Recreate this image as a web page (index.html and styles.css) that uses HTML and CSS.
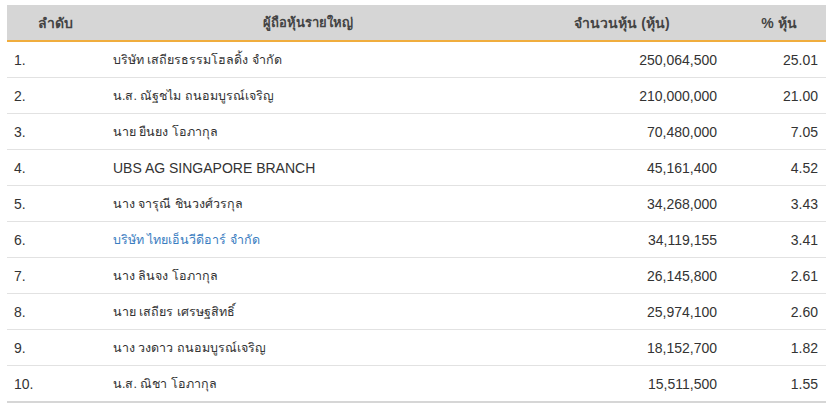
FILE: index.html
```html
<!DOCTYPE html>
<html lang="th">
<head>
<meta charset="utf-8">
<link rel="stylesheet" href="styles.css">
</head>
<body>
<div class="wrap">
<table class="holders">
<thead>
<tr>
<th class="c-no">ลำดับ</th>
<th class="c-name th">ผู้ถือหุ้นรายใหญ่</th>
<th class="c-shares">จำนวนหุ้น (หุ้น)</th>
<th class="c-pct">% หุ้น</th>
</tr>
</thead>
<tbody>
<tr><td class="c-no">1.</td><td class="c-name th">บริษัท เสถียรธรรมโฮลดิ้ง จำกัด</td><td class="c-shares">250,064,500</td><td class="c-pct">25.01</td></tr>
<tr><td class="c-no">2.</td><td class="c-name th">น.ส. ณัฐชไม ถนอมบูรณ์เจริญ</td><td class="c-shares">210,000,000</td><td class="c-pct">21.00</td></tr>
<tr><td class="c-no">3.</td><td class="c-name th">นาย ยืนยง โอภากุล</td><td class="c-shares">70,480,000</td><td class="c-pct">7.05</td></tr>
<tr><td class="c-no">4.</td><td class="c-name">UBS AG SINGAPORE BRANCH</td><td class="c-shares">45,161,400</td><td class="c-pct">4.52</td></tr>
<tr><td class="c-no">5.</td><td class="c-name th">นาง จารุณี ชินวงศ์วรกุล</td><td class="c-shares">34,268,000</td><td class="c-pct">3.43</td></tr>
<tr><td class="c-no">6.</td><td class="c-name th"><a class="link" href="#">บริษัท ไทยเอ็นวีดีอาร์ จำกัด</a></td><td class="c-shares">34,119,155</td><td class="c-pct">3.41</td></tr>
<tr><td class="c-no">7.</td><td class="c-name th">นาง ลินจง โอภากุล</td><td class="c-shares">26,145,800</td><td class="c-pct">2.61</td></tr>
<tr><td class="c-no">8.</td><td class="c-name th">นาย เสถียร เศรษฐสิทธิ์</td><td class="c-shares">25,974,100</td><td class="c-pct">2.60</td></tr>
<tr><td class="c-no">9.</td><td class="c-name th">นาง วงดาว ถนอมบูรณ์เจริญ</td><td class="c-shares">18,152,700</td><td class="c-pct">1.82</td></tr>
<tr><td class="c-no">10.</td><td class="c-name th">น.ส. ณิชา โอภากุล</td><td class="c-shares">15,511,500</td><td class="c-pct">1.55</td></tr>
</tbody>
</table>
</div>
</body>
</html>
```

FILE: styles.css
```css
html, body {
  margin: 0;
  padding: 0;
  background: #ffffff;
}
body {
  font-family: Tahoma, "Liberation Sans", Arial, sans-serif;
  font-size: 14px;
  color: #333333;
}
.wrap {
  padding: 5px 9px 0 7px;
}
.holders {
  width: 819px;
  border-collapse: collapse;
  table-layout: fixed;
}
.holders th {
  height: 35px;
  padding: 0;
  background: #d6d6d6;
  border-bottom: 2px solid #f0ad3e;
  font-weight: bold;
  color: #444444;
  text-align: center;
  vertical-align: middle;
}
.holders td {
  height: 35px;
  padding: 0;
  border-bottom: 1px solid #e2e2e2;
  vertical-align: middle;
}
.holders tbody tr:last-child td {
  border-bottom: 2px solid #d6d6d6;
}
.c-no { width: 96px; }
.c-name { width: 409px; }
.c-shares { width: 220px; }
.c-pct { width: 94px; }
td.c-no { padding-left: 7px; }
td.c-name { padding-left: 10px; }
td.th { font-size: 12.5px; }
th.th { font-size: 13px; }
td.c-shares { text-align: right; padding-right: 15px; }
td.c-pct { text-align: right; padding-right: 8px; }
.link {
  color: #3a7dbf;
  text-decoration: none;
}
```
